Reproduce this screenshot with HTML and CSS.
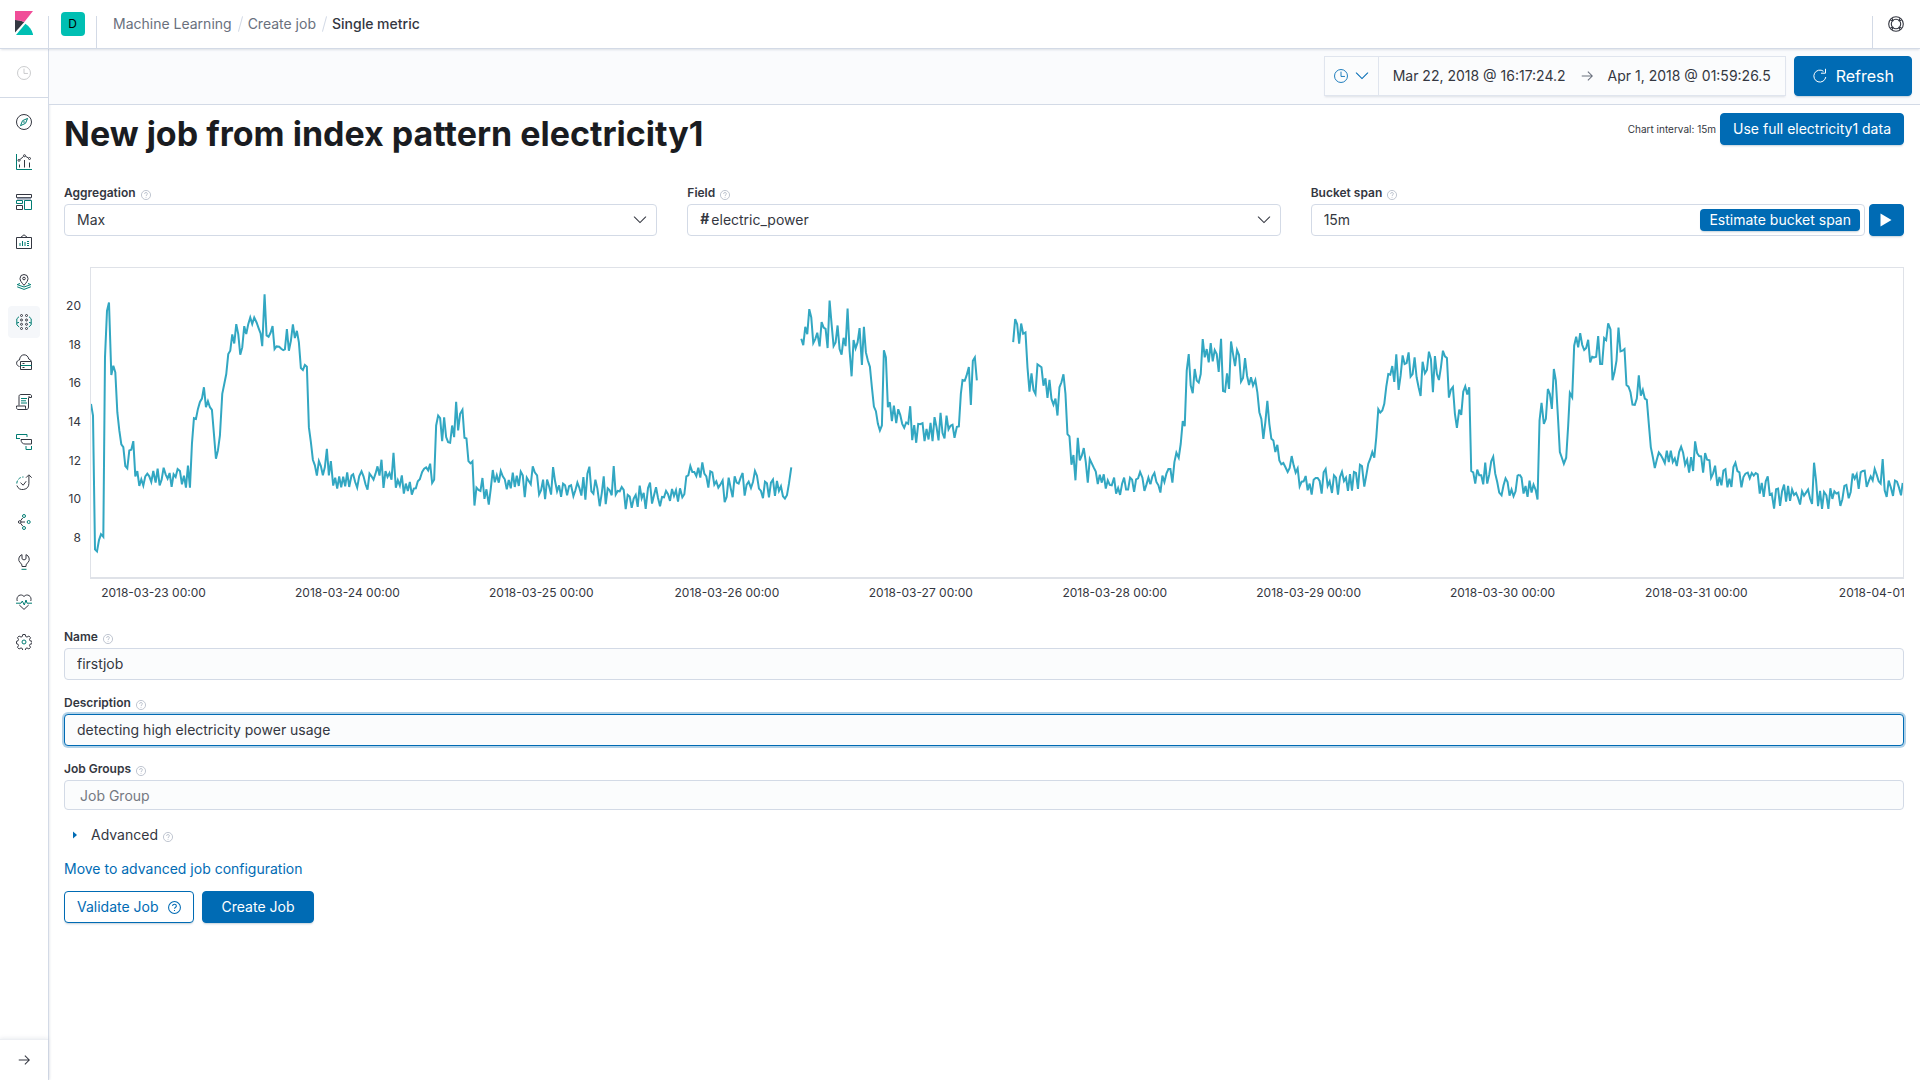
FILE: index.html
```html
<!DOCTYPE html>
<html lang="en">
<head>
<meta charset="utf-8">
<meta name="viewport" content="width=device-width, initial-scale=1">
<title>Single metric - Machine Learning</title>
<link rel="stylesheet" href="styles.css">
</head>
<body>
<svg class="defs" aria-hidden="true">
  <symbol id="i-help" viewBox="0 0 16 16"><circle cx="8" cy="8" r="7.3" fill="none" stroke="currentColor" stroke-width="1.3"/><path d="M5.6 6.2C5.7 4.7 6.7 4 8 4s2.300.8 2.300 2c0 1.700-2.200 1.700-2.200 3.600M8 11v1.400" fill="none" stroke="currentColor" stroke-width="1.300"/></symbol>
  <symbol id="i-clock" viewBox="0 0 16 16"><g fill="none" stroke="currentColor"><circle cx="8" cy="8" r="7.400"/><path d="M8 3v5.500h4.500"/></g></symbol>
  <symbol id="i-chevron" viewBox="0 0 16 16"><path d="M1.500 4.500 8 11l6.500-6.500" fill="none" stroke="currentColor" stroke-width="1.200" stroke-linecap="round"/></symbol>
  <symbol id="i-arrow" viewBox="0 0 16 16"><path d="M2 8h12M9 3l5 5-5 5" fill="none" stroke="currentColor" stroke-width="1.200"/></symbol>
</svg>

<header class="header">
  <a class="logo" href="#" aria-label="Kibana home">
    <svg width="18" height="24" viewBox="0 0 18 24"><path fill="#343741" d="M0 9v12.500L9.300 11A20 20 0 0 0 0 9z"/><path fill="#f04e98" d="M0 0v9c3.400 0 6.500.8 9.300 2L18 0z"/><path fill="#00bfb3" d="M10.400 12.800 1 24h17.200c-1-4.700-3.800-8.600-7.800-11.200z"/></svg>
  </a>
  <div class="header-cell"><button class="avatar" type="button" aria-label="Default space">D</button></div>
  <nav class="crumbs" aria-label="Breadcrumbs">
    <a href="#">Machine Learning</a><span class="slash"></span><a href="#">Create job</a><span class="slash"></span><span class="current">Single metric</span>
  </nav>
  <div class="header-cell header-help">
    <button class="icon-button" type="button" aria-label="Help">
      <svg width="16" height="16" viewBox="0 0 16 16" fill="none" stroke="#343741" stroke-width="1.100"><circle cx="8" cy="8" r="7.300"/><circle cx="8" cy="8" r="4.700"/><path d="M2.400 4.200 4.900 4.500 4.300 2.300M13.600 4.200l-2.500.3.600-2.200M2.400 11.800l2.500-.3-.6 2.200M13.600 11.800l-2.500-.3.600 2.200"/></svg>
    </button>
  </div>
</header>

<div class="shell">
  <nav class="sidebar" aria-label="Applications">
    <button class="recent" type="button" aria-label="Recently viewed"><svg width="14" height="14"><use href="#i-clock"/></svg></button>
    <div class="apps">
      <a href="#" aria-label="Discover"><svg viewBox="0 0 16 16"><circle class="d" cx="8" cy="8" r="7.500"/><path class="t" d="M11.600 4.400 9.500 9.300 4.500 11.700 6.500 6.700z"/><circle class="t" cx="8" cy="8" r=".4"/></svg></a>
      <a href="#" aria-label="Visualize"><svg viewBox="0 0 16 16"><path class="t" d="M.5 0v15.500H16"/><path class="d" d="M3.500 13.500v-3M8.500 13.500V6M13.500 13.500v-5M4 5.500l3.500-3M9.500 2.300l3 1.700"/><circle class="d" cx="3" cy="6.300" r="1"/><circle class="d" cx="8.500" cy="1.700" r="1"/><circle class="d" cx="13.500" cy="4.500" r="1"/></svg></a>
      <a href="#" aria-label="Dashboard"><svg viewBox="0 0 16 16"><path class="d" d="M.5.5h15v3H.5z"/><path class="g" d="M1 4.700h14"/><path class="t" d="M.5 6.500h6v3h-6zM8.500 6.500h7v9h-7z"/><path class="d" d="M.5 11.500h6v4h-6z"/></svg></a>
      <a href="#" aria-label="Canvas"><svg viewBox="0 0 16 16"><path class="d" d="M.5 3.500h15v11H.5zM4.500 3.500 8 .8l3.500 2.700"/><path class="t" d="M4 12V9M6.500 12V7M9 12V8M11 7.500h2M11 9.500h2M11 11.500h2"/></svg></a>
      <a href="#" aria-label="Maps"><svg viewBox="0 0 16 16"><path class="d" d="M8 11.300C5.500 8.500 4 6.500 4 4.500a4 4 0 0 1 8 0c0 2-1.500 4-4 6.800z"/><circle class="d" cx="8" cy="4.500" r="1.300"/><path class="t" d="M4 9.500 1.200 10.600 8 13l6.800-2.400L12 9.500M1.200 12.800 8 15.400l6.800-2.600"/></svg></a>
      <a class="active" href="#" aria-label="Machine Learning"><svg viewBox="0 0 16 16"><g class="d"><circle cx="5.500" cy="1.500" r="1"/><circle cx="10.500" cy="1.500" r="1"/><circle cx="5.500" cy="6" r="1"/><circle cx="10.500" cy="6" r="1"/><circle cx="5.500" cy="10.300" r="1"/><circle cx="10.500" cy="10.300" r="1"/><circle cx="5.500" cy="14.500" r="1"/><circle cx="10.500" cy="14.500" r="1"/></g><path class="t" d="M3 2.700 .8 4.800v6l2.400 2.200M13 2.700l2.200 2.100v6l-2.400 2.200M.8 9l2.200-.6M15.200 9l-2.200-.6"/></svg></a>
      <a href="#" aria-label="Infrastructure"><svg viewBox="0 0 16 16"><path class="d" d="M3.500 12.500C1.800 12 .6 11 .6 9.200.6 7.400 1.800 6.200 3.500 6 3.700 3 5.500.8 8 .8c2.300 0 4.300 1.500 4.700 4.200 1.200.3 2 .9 2.500 2"/><path class="d" d="M4.500 7.500h11v8h-11z"/><path class="t" d="M4.500 11.500h11"/><path class="d" d="M6.500 9.500h2M6.500 13.500h2"/></svg></a>
      <a href="#" aria-label="Logs"><svg viewBox="0 0 16 16"><path class="d" d="M3 11.500V2.500c0-1.300.7-2 2-2h9c1 0 1.500.7 1.500 1.500v1.500H13V2M12.500 3.500v9.500c0 1.500-.7 2.500-2 2.500H2c-1 0-1.500-1-1.500-2v-1.500h9V14c0 .8.500 1.500 1.500 1.500"/><path class="t" d="M5 4.500h6M5 6.800h5M5 9h6"/></svg></a>
      <a href="#" aria-label="APM"><svg viewBox="0 0 16 16"><path class="t" d="M.5 5V.500H11V3M.5 4.500h3.500"/><path class="d" d="M5 5.500h10.500v4.500H9c-2.300 0-4-1.600-4-4.500z"/><path class="t" d="M10 12v3.500h5.500V12"/></svg></a>
      <a href="#" aria-label="Uptime"><svg viewBox="0 0 16 16"><path class="t" stroke-dasharray="3 1.500" d="M.8 9.500A6.600 6.600 0 0 1 7.500 3"/><path class="d" d="M.9 11.500a6.200 6.200 0 0 0 12-2V1.500M10 3.700 12.900.8 15.700 3.700M4.500 8.700l2.700 2.500 3-4"/></svg></a>
      <a href="#" aria-label="Graph"><svg viewBox="0 0 16 16"><circle class="t" cx="8" cy="2" r="1.500"/><circle class="t" cx="12.700" cy="8" r="1.500"/><circle class="t" cx="8" cy="14" r="1.500"/><circle class="d" cx="3.700" cy="8" r="1.300"/><path class="d" d="M5 8h4M4.500 6.800 6.700 4M4.500 9.200l2.200 2.800"/></svg></a>
      <a href="#" aria-label="Dev Tools"><svg viewBox="0 0 16 16"><path class="d" d="M6 .6v4.200L8 6l2-1.200V.6a5 5 0 0 1 2 8C10.700 9.500 10 10 10 12.500H6C6 10 5.300 9.500 4 8.600a5 5 0 0 1 2-8z"/><path class="t" d="M5.500 15.300h5"/></svg></a>
      <a href="#" aria-label="Stack Monitoring"><svg viewBox="0 0 16 16"><path class="d" d="M1.200 7C-.3 2 5-1 8 2.500c3-3.500 8.300-.5 6.800 4.500M3.300 11 8 15.400l4.700-4.400"/><path class="t" d="M0 9.200h5L6.300 7l2 4 1.700-5 1 3.200h5"/></svg></a>
      <a href="#" aria-label="Management"><svg viewBox="0 0 16 16"><path class="d" d="M6.800.5h2.400l.5 2 1.300.600 1.900-1.100 1.600 1.700-1 1.800.5 1.300 2 .5v2.400l-2 .5-.5 1.200 1 1.900-1.600 1.700-1.900-1.100-1.300.6-.5 2H6.800l-.5-2-1.300-.6L3.100 15l-1.600-1.700 1-1.900-.5-1.200-1.500-.5V7.300l1.500-.5.5-1.300-1-1.800L3.100 2 5 3.100l1.300-.6z"/><circle class="t" cx="8" cy="8" r="2"/></svg></a>
    </div>
    <button class="expand" type="button" aria-label="Expand navigation"><svg width="14" height="14"><use href="#i-arrow"/></svg></button>
  </nav>

  <main class="main">
    <div class="query-bar">
      <div class="date-picker">
        <button class="quick" type="button" aria-label="Quick select"><svg width="14" height="14"><use href="#i-clock"/></svg><svg width="14" height="14"><use href="#i-chevron"/></svg></button>
        <button class="date" type="button">Mar 22, 2018 @ 16:17:24.2</button>
        <svg class="to" width="14" height="14"><use href="#i-arrow"/></svg>
        <button class="date" type="button">Apr 1, 2018 @ 01:59:26.5</button>
      </div>
      <button class="btn btn-fill refresh" type="button"><svg width="16" height="16" viewBox="0 0 16 16"><path d="M13.800 9A6 6 0 1 1 11.500 3.300M13.500.8v4.400H9" fill="none" stroke="currentColor"/></svg>Refresh</button>
    </div>

    <form class="content">
      <div class="title-row">
        <h1>New job from index pattern electricity1</h1>
        <div class="title-actions"><span class="interval">Chart interval: 15m</span><button class="btn btn-fill" type="button">Use full electricity1 data</button></div>
      </div>

      <div class="fields">
        <div>
          <div class="label-row"><label for="agg">Aggregation</label><svg class="help"><use href="#i-help"/></svg></div>
          <div class="select"><select id="agg"><option>Max</option></select><svg class="caret"><use href="#i-chevron"/></svg></div>
        </div>
        <div>
          <div class="label-row"><label for="field">Field</label><svg class="help"><use href="#i-help"/></svg></div>
          <div class="select typed"><span class="type">#</span><select id="field"><option>electric_power</option></select><svg class="caret"><use href="#i-chevron"/></svg></div>
        </div>
        <div>
          <div class="label-row"><label for="span">Bucket span</label><svg class="help"><use href="#i-help"/></svg></div>
          <div class="span-row">
            <div class="input-group"><input id="span" type="text" value="15m"><button class="estimate" type="button">Estimate bucket span</button></div>
            <button class="btn btn-fill play" type="button" aria-label="Run"><svg width="12" height="14" viewBox="0 0 12 14"><path d="M.5.500v13L11.500 7z" fill="currentColor"/></svg></button>
          </div>
        </div>
      </div>

      <figure class="chart">
        <div class="y-axis"><span>20</span><span>18</span><span>16</span><span>14</span><span>12</span><span>10</span><span>8</span></div>
        <div class="plot">
          <svg class="series" viewBox="0 0 5439 930" preserveAspectRatio="none" role="img" aria-label="Max electric_power over time">
            <g transform="translate(-93 -21)"><polyline points="93,430 99,465 105,868 111,874 117,840 123,822 130,830 135,290 141,150 147,125 154,343 160,315 166,335 172,455 178,510 184,552 190,560 196,617 202,624 208,570 214,568 220,542 226,648 232,632 238,677 244,657 250,676 256,648 262,640 268,648 274,665 280,632 287,667 293,625 299,675 305,658 311,622 317,642 323,655 329,638 335,680 341,642 347,650 353,626 360,632 366,672 372,646 378,682 384,616 390,682 396,550 402,473 408,475 414,445 420,424 426,414 432,380 438,440 444,422 450,440 456,448 462,520 468,595 474,570 480,525 487,400 493,370 499,340 505,280 511,270 517,221 523,248 529,190 535,220 541,282 547,260 553,196 559,220 565,190 571,170 577,190 583,170 590,185 596,202 602,218 607,256 614,100 620,224 626,228 632,216 638,196 644,265 650,257 658,258 664,264 670,268 675,266 681,205 687,270 693,240 699,191 705,232 711,210 717,245 723,322 729,328 735,313 741,318 747,500 753,545 759,598 765,615 771,646 777,602 783,617 789,645 795,620 801,565 807,645 813,602 820,676 826,652 832,685 838,648 844,681 850,649 856,678 862,636 868,680 875,646 880,642 886,665 892,682 898,648 905,633 911,648 917,672 923,688 929,640 935,648 941,658 947,640 953,618 959,646 965,598 971,683 977,632 983,650 989,638 995,658 1001,577 1008,682 1014,660 1020,676 1026,645 1032,700 1038,670 1044,692 1050,665 1056,703 1062,685 1068,684 1074,663 1080,657 1087,635 1093,625 1099,621 1105,630 1111,610 1117,668 1123,658 1129,495 1135,465 1141,473 1147,542 1153,471"/></g>
            <g transform="translate(1047 -21)"><polyline points="13,471 19,530 25,545 31,547 37,495 43,530 49,424 55,510 61,460 68,448 74,532 80,534 86,602 92,609 98,603 104,736 110,682 116,689 122,692 128,653 134,716 140,687 147,733 153,685 159,629 165,666 171,645 177,667 183,632 189,648 195,657 201,687 207,659 213,684 219,637 225,680 231,646 237,677 243,634 249,645 255,711 261,652 267,662 273,672 279,618 285,636 292,645 298,703 304,690 310,658 316,717 322,658 328,678 334,703 340,620 346,663 352,693 358,675 364,710 370,670 376,675 382,705 388,678 394,675 401,708 407,690 413,667 419,683 425,706 431,650 437,718 443,640 449,619 455,693 461,700 467,658 473,685 480,738 486,700 492,648 498,732 504,684 510,690 516,705 522,617 528,703 534,692 540,693 546,680 552,689 558,747 564,704 570,709 576,743 582,715 588,704 594,740 600,676 606,714 612,698 618,746 625,683 631,667 637,730 643,705 649,681 655,713 661,738 667,710 673,711 679,692 685,702 691,722 697,686 703,707 709,690 715,724 721,684 728,711 734,702 740,648 746,645 752,617 758,635 764,635 770,647 776,622 782,652 788,606 794,640 800,648 806,682 812,633 818,636 824,673 830,663 836,682 842,673 849,660 855,726 861,710 867,652 873,683 879,711 885,648 891,667 897,670 903,652 909,638 915,706 921,673 927,664 934,683 940,665 946,632 952,646 958,685 964,692 970,714 976,664 982,669 988,711 994,667 1000,658 1006,707 1012,662 1018,692 1024,678 1030,708 1036,715 1042,705 1048,670 1055,621"/></g>
            <g transform="translate(2067 -21)"><polyline points="65,234 71,253 77,198 83,220 89,145 95,170 101,247 107,235 113,216 120,257 126,184 132,200 138,204 144,262 150,119 156,190 162,256 168,245 174,194 180,265 186,282 192,231 198,256 204,143 210,270 216,347 222,238 228,263 234,245 240,202 247,313 253,198 259,275 265,300 271,318 277,380 283,438 289,452 295,490 301,510 307,495 313,269 319,290 325,440 331,425 337,482 343,435 350,488 356,446 362,463 368,490 374,502 380,486 386,490 392,437 398,539 404,494 410,547 416,490 422,491 429,488 435,542 441,505 447,537 453,487 459,542 465,470 471,500 477,540 483,457 489,518 495,534 501,465 507,507 513,496 519,493 525,532 532,499 538,498 544,400 549,358 556,360 561,345 568,319 574,433 580,300 586,290 592,359"/>
            <polyline points="701,244 707,175 713,190 719,249 725,188 731,219 738,215 744,320 750,393 756,338 762,388 768,400 774,311 780,315 786,320 792,375 798,353 804,412 810,358 816,415 822,432 828,414 834,465 840,380 846,365 852,341 858,400 864,521 870,528 876,613 882,584 888,660 895,532 901,600 907,586 913,563 919,605 925,667 931,596 937,609 943,622 949,634 955,671 961,643 967,667 973,642 979,685 985,660 991,674 997,675 1004,652 1010,700 1016,683 1022,704 1028,670 1034,652 1040,688 1046,688 1052,652 1058,658 1064,695 1070,657 1076,654 1082,635 1089,652 1095,692 1101,673 1107,652 1113,672"/></g>
            <g transform="translate(3147 -21)"><polyline points="33,672 39,648 45,638 51,665 57,675 63,697 69,646 75,665 81,640 87,626 93,626 99,667 105,605 111,577 118,592 124,550 130,482 136,497 142,330 148,280 154,375 160,398 166,325 172,360 178,366 184,340 190,235 196,290 202,265 208,305 214,247 220,302 226,268 232,280 238,334 245,234 251,391 257,393 263,338 269,385 275,242 281,280 287,316 293,268 299,283 305,363 311,352 317,292 323,345 329,373 335,350 341,375 348,358 354,395 360,455 366,475 372,535 378,485 384,421 390,490 396,535 402,540 408,575 414,553 420,600 426,612 432,608 438,620 445,635 451,623 457,587 463,615 469,637 475,624 481,678 487,664 493,663 499,647 505,690 511,670 517,703 523,658 529,653 535,653 541,662 547,700 553,636 559,626 565,677 571,663 578,698 584,645 590,652 596,703 602,650 608,634 614,662 620,652 626,692 632,641 638,691 644,635 650,638 656,686 662,613 668,617 675,679 681,645 687,610 693,595 699,575 705,592 711,530 717,446 723,456 729,450 735,430 741,378 747,340 753,342 759,316 765,364 771,281 778,388 784,345 790,284 796,310 802,307 808,275 814,348 820,340 826,290 832,350 838,380 844,406 850,303 857,338 863,328 869,273 875,295 881,395 887,286 893,340 899,358 905,320 911,270 917,287 923,292 929,411 935,387 941,379 947,460 953,502 960,447 966,463 972,393 978,377 984,402 990,380 996,632 1002,636 1008,670 1014,628 1020,645 1026,645 1032,672 1038,607 1044,670 1050,643 1056,603 1062,589 1068,640 1074,665 1080,697 1087,705 1093,675 1099,654 1105,665 1111,706 1117,688 1123,708 1129,693 1135,646 1141,643"/></g>
            <g transform="translate(4287 -21)"><polyline points="1,643 7,652 13,700 19,677 25,710 31,661 37,697 43,673 49,688 55,718 61,480 67,427 74,490 80,475 86,385 92,400 98,445 104,325 110,360 116,465 122,575 128,592 134,610 141,592 147,495 152,397 159,410 165,255 171,228 177,260 183,217 189,252 195,268 201,262 207,237 213,305 219,288 225,290 231,288 237,226 243,310 249,310 255,232 261,238 267,188 274,206 280,359 286,335 292,300 298,200 304,272 310,270 316,265 322,373 328,378 334,395 340,432 347,433 353,414 359,344 365,405 371,388 377,414 383,418 389,490 395,560 401,590 407,623 413,598 419,576 425,584 431,595 437,608 443,571 449,605 455,571 461,605 467,594 473,617 480,575 486,559 492,577 498,613 504,598 510,637 516,590 522,632 528,543 534,578 540,587 546,588 552,637 558,578 564,598 571,600 576,652 582,639 588,616 595,677 601,650 607,675 613,631 619,627 625,681 631,655 637,680 643,620 649,607 655,632 661,636 667,681 673,650 679,640 686,637 692,654 698,638 704,646 710,638 716,642 722,700 728,668 734,710 740,663 746,648 752,703 758,700 765,745 771,687 777,685 783,737 789,693 795,673 801,724 807,677 813,722 819,688 825,704 831,698 837,713 843,733 849,693 855,706 861,697 867,688 873,715 879,731 885,607 891,660 897,738 903,692 909,746 915,695 922,705 928,746 934,684 940,716 946,693 952,700 958,697 964,737 970,717 976,677 982,674 989,714 995,695 1001,640 1007,655 1013,642 1019,686 1025,636 1031,632 1037,631 1043,680 1049,663 1055,648 1061,660 1067,626 1073,643 1079,663 1085,670 1091,596 1097,690 1103,710 1109,661 1116,683 1122,707 1128,661 1134,664 1140,682 1146,705 1151,668"/></g>
          </svg>
          <svg class="x-axis">
            <text x="3.5%" y="18">2018-03-23 00:00</text><text x="14.19%" y="18">2018-03-24 00:00</text><text x="24.88%" y="18">2018-03-25 00:00</text><text x="35.11%" y="18">2018-03-26 00:00</text><text x="45.80%" y="18">2018-03-27 00:00</text><text x="56.49%" y="18">2018-03-28 00:00</text><text x="67.18%" y="18">2018-03-29 00:00</text><text x="77.87%" y="18">2018-03-30 00:00</text><text x="88.55%" y="18">2018-03-31 00:00</text><text x="99.25%" y="18">2018-04-01 00:00</text>
          </svg>
        </div>
      </figure>

      <div class="details">
        <div>
          <div class="label-row"><label for="name">Name</label><svg class="help"><use href="#i-help"/></svg></div>
          <input class="soft" id="name" type="text" value="firstjob">
        </div>
        <div>
          <div class="label-row"><label for="desc">Description</label><svg class="help"><use href="#i-help"/></svg></div>
          <input class="soft focused" id="desc" type="text" value="detecting high electricity power usage">
        </div>
        <div>
          <div class="label-row"><label for="groups">Job Groups</label><svg class="help"><use href="#i-help"/></svg></div>
          <input class="soft groups" id="groups" type="text" placeholder="Job Group">
        </div>
        <button class="advanced" type="button"><svg width="6" height="8" viewBox="0 0 6 8"><path d="M1 0.500v7L5 4z" fill="#006bb4"/></svg><span>Advanced</span><svg class="help"><use href="#i-help"/></svg></button>
        <a class="link" href="#">Move to advanced job configuration</a>
      </div>
      <div class="actions">
        <button class="btn btn-outline" type="button">Validate Job<svg width="13" height="13"><use href="#i-help"/></svg></button>
        <button class="btn btn-fill create" type="submit">Create Job</button>
      </div>
    </form>
  </main>
</div>
</body>
</html>
```

FILE: styles.css
```css
* { box-sizing: border-box; }

:root {
  --text: #343741;
  --border: #d3dae6;
  --blue: #006bb4;
  --soft: #fbfcfd;
}

body {
  margin: 0;
  display: flex;
  flex-direction: column;
  min-height: 100vh;
  font: 14px/20px Inter, "Liberation Sans", sans-serif;
  color: var(--text);
  background: #fff;
}

svg { display: block; flex: none; }
a { color: var(--blue); text-decoration: none; }
button, input, select { font: inherit; color: inherit; margin: 0; }
button { border: 0; background: none; padding: 0; cursor: pointer; }
.defs { position: absolute; width: 0; height: 0; }

/* Header */
.header {
  position: relative;
  z-index: 2;
  display: flex;
  height: 49px;
  border-bottom: 1px solid var(--border);
  background: #fff;
  box-shadow: 0 2px 2px -1px rgba(152, 162, 179, .3);
}
.logo { width: 48px; padding: 11px 15px; }
.header-cell {
  display: flex;
  align-items: center;
  justify-content: center;
  width: 48px;
  border-left: 1px solid var(--border);
  border-image: linear-gradient(transparent 16px, var(--border) 16px) 1;
}
.header-cell + .crumbs {
  border-left: 1px solid var(--border);
  border-image: linear-gradient(transparent 16px, var(--border) 16px) 1;
}
.header-help { margin-left: auto; padding-right: 2px; }
.avatar {
  width: 24px;
  height: 24px;
  border-radius: 4px;
  background: #00bfb3;
  color: #000;
  font-size: 12px;
  line-height: 22px;
}
.crumbs { display: flex; align-items: center; padding-left: 16px; }
.crumbs a { color: #69707d; }
.crumbs .current { font-weight: 500; }
.slash { width: 1px; height: 16px; margin: 0 7px 0 8px; background: var(--border); transform: rotate(15deg); }

/* Shell */
.shell { display: flex; flex: 1; }
.sidebar {
  display: flex;
  flex-direction: column;
  align-items: center;
  width: 49px;
  border-right: 1px solid var(--border);
  box-shadow: 1px 0 2px rgba(152, 162, 179, .2);
}
.recent {
  display: grid;
  place-items: center;
  width: 100%;
  height: 49px;
  border-bottom: 1px solid var(--border);
  color: #c2c3c6;
}
.apps { display: grid; gap: 8px; padding-top: 8px; }
.apps a { display: grid; place-items: center; width: 32px; height: 32px; border-radius: 4px; }
.apps .active { background: #f5f7fa; }
.apps svg { width: 16px; height: 16px; fill: none; stroke-width: 1; }
.d { stroke: #343741; }
.t { stroke: #017d73; }
.g { stroke: #98a2b3; stroke-width: 2; }
.expand {
  display: grid;
  place-items: center;
  width: 100%;
  height: 41px;
  margin-top: auto;
  border-top: 1px solid #edeff3;
  box-shadow: 0 -1px 4px rgba(152, 162, 179, .2);
}
.main { flex: 1; min-width: 0; }

/* Buttons */
.btn {
  display: flex;
  align-items: center;
  justify-content: center;
  height: 32px;
  padding: 0 12px;
  border: 1px solid var(--blue);
  border-radius: 4px;
  box-shadow: 0 2px 2px -1px rgba(54, 97, 126, .3);
}
.btn-fill { background: var(--blue); color: #fff; }
.btn-outline { gap: 9px; background: #fff; color: var(--blue); }
.create { padding: 0 19px; }

/* Time range */
.query-bar {
  display: flex;
  justify-content: flex-end;
  gap: 8px;
  padding: 7px 8px 8px;
  border-bottom: 1px solid var(--border);
  background: #fafbfd;
}
.date-picker {
  display: flex;
  align-items: center;
  height: 40px;
  border: 1px solid #e0e5ee;
  background: var(--soft);
  box-shadow: 0 2px 2px -1px rgba(152, 162, 179, .3);
}
.quick {
  display: flex;
  align-items: center;
  gap: 7px;
  height: 100%;
  padding: 0 9px;
  border-right: 1px solid #e0e5ee;
  color: var(--blue);
}
.date { padding: 0 14px; }
.to { color: #69707d; }
.refresh { height: 40px; gap: 8px; padding: 0 17px; font-size: 16px; }

/* Job form */
.content { padding: 8px 16px 24px 15px; }
.title-row { display: flex; justify-content: space-between; align-items: flex-start; }
h1 { margin: 0; font-size: 34px; line-height: 42px; font-weight: 700; color: #1a1c21; }
.title-actions { display: flex; align-items: center; gap: 4px; }
.interval { font-size: 10px; }
.fields { display: grid; grid-template-columns: repeat(3, 1fr); gap: 30px; margin-top: 29px; }
.label-row { display: flex; align-items: center; gap: 5px; height: 20px; padding-bottom: 2px; }
label { font-size: 12px; line-height: 18px; font-weight: 600; }
.help { width: 10px; height: 10px; margin-top: 4px; color: #b2b9c6; }

input, select {
  display: block;
  width: 100%;
  height: 32px;
  padding: 0 12px 1px;
  border: 1px solid var(--border);
  border-radius: 4px;
  background: #fff;
  outline: 0;
}
.soft { background: var(--soft); }
.focused { border-color: var(--blue); box-shadow: 0 0 0 2px rgba(0, 107, 180, .3); }
.groups { height: 30px; padding: 0 15px; }
.groups::placeholder { color: #757982; opacity: 1; }
.select { position: relative; }
.select select { appearance: none; }
.caret { position: absolute; right: 10px; top: 9px; width: 14px; height: 14px; pointer-events: none; }
.type { position: absolute; left: 13px; top: 5px; font-weight: 700; }
.typed select { padding-left: 23px; }
.span-row { display: flex; gap: 4px; }
.input-group { position: relative; flex: 1; }
.estimate {
  position: absolute;
  top: 5px;
  right: 5px;
  height: 22px;
  padding: 0 9px;
  border-radius: 4px;
  background: var(--blue);
  color: #fff;
  box-shadow: 0 2px 2px -1px rgba(54, 97, 126, .3);
}
.play { width: 35px; padding: 0; }

/* Chart */
.chart { display: grid; grid-template-columns: 26px 1fr; margin: 31px 0 25px; font-size: 12px; }
.y-axis { display: grid; grid-template-rows: repeat(7, 1fr); height: 310px; padding: 20px 9px 20px 0; text-align: right; align-items: center; }
.plot { min-width: 0; }
.series {
  width: 100%;
  height: 312px;
  border: solid #dfe2e8;
  border-width: 1px 1px 2px 1px;
}
.series polyline { fill: none; stroke: #32a7c2; stroke-width: 2px; vector-effect: non-scaling-stroke; }
.x-axis { width: 100%; height: 24px; overflow: hidden; fill: var(--text); text-anchor: middle; }

.details { display: grid; gap: 14px; justify-items: stretch; }
.advanced { display: flex; align-items: center; gap: 5px; margin-top: 1px; padding-left: 8px; justify-self: start; }
.advanced span { margin-left: 8px; }
.link { justify-self: start; }
.actions { display: flex; gap: 8px; margin-top: 12px; }
```
